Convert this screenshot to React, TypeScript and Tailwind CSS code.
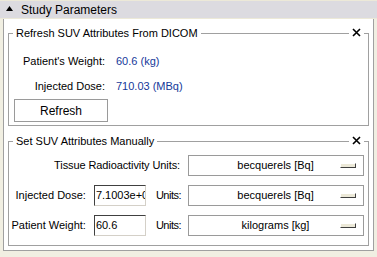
import React from "react";

function CloseX() {
  return (
    <svg width="9" height="9" viewBox="0 0 9 9" className="block">
      <path d="M1 1 L8 8 M8 1 L1 8" stroke="#000" strokeWidth="1.6" />
    </svg>
  );
}

function Group({ title, children, className }: { title: string; children: React.ReactNode; className?: string }) {
  return (
    <div className={`relative border border-[#a0a0a0] ${className ?? ""}`}>
      <div className="absolute -top-[8px] left-[4px] bg-white px-[3px] leading-[14px] whitespace-nowrap">{title}</div>
      <div className="absolute -top-[6px] right-[4px] bg-white pl-[3px] pr-[3px]">
        <CloseX />
      </div>
      {children}
    </div>
  );
}

function Dropdown({ label }: { label: string }) {
  return (
    <div className="flex h-[21px] w-[176px] shrink-0 items-center border border-[#9a9a9a] bg-white">
      <span className="flex-1 pl-[34px] text-center whitespace-nowrap">{label}</span>
      <span className="mr-[7px] ml-[12px] h-[5px] w-[16px] border border-[#ffffff] border-r-[#404040] border-b-[#404040] bg-[#ece9d8]" />
    </div>
  );
}

function Field({ value }: { value: string }) {
  return (
    <div className="mr-[10px] h-[21px] w-[52px] shrink-0 overflow-hidden border border-[#404040] border-r-[#d4d0c8] border-b-[#d4d0c8] bg-white pl-[1px] leading-[19px] whitespace-nowrap">
      {value}
    </div>
  );
}

export default function App() {
  return (
    <div
      className="h-[257px] w-[377px] bg-[#f1efe2] text-[11px] text-black"
      style={{ fontFamily: '"Liberation Sans", Arial, sans-serif' }}
    >
      <div className="flex h-[19px] items-center border-t border-b border-[#ece9d8] bg-[#dcdbe0] pl-[6px]">
        <svg width="7" height="5" viewBox="0 0 7 5" className="mr-[8px] mb-[2px]">
          <path d="M0 5 L3.5 0 L7 5 Z" fill="#000" />
        </svg>
        <span className="text-[12px]">Study Parameters</span>
      </div>
      <div className="mx-[3px] h-[232px] border border-t-0 border-[#a0a0a0] bg-white px-[4px] pt-[14px]">
        <Group title="Refresh SUV Attributes From DICOM" className="h-[93px]">
          <div className="grid grid-cols-[96px_1fr] gap-x-[11px] gap-y-[8px] pt-[19px]">
            <span className="text-right whitespace-nowrap">Patient's Weight:</span>
            <span className="text-[#15389a]">60.6 (kg)</span>
            <span className="text-right whitespace-nowrap">Injected Dose:</span>
            <span className="text-[#15389a]">710.03 (MBq)</span>
          </div>
          <button className="mt-[5px] ml-[5px] h-[23px] w-[94px] border border-[#9a9a9a] bg-white text-[12px]">
            Refresh
          </button>
        </Group>
        <Group title="Set SUV Attributes Manually" className="mt-[15px] h-[105px]">
          <div className="flex flex-col gap-[9px] pt-[13px] pr-[4px]">
            <div className="flex items-center justify-end">
              <span className="mr-[8px] whitespace-nowrap tracking-[-0.1px]">Tissue Radioactivity Units:</span>
              <Dropdown label="becquerels [Bq]" />
            </div>
            <div className="flex items-center justify-end">
              <span className="mr-[8px] whitespace-nowrap">Injected Dose:</span>
              <Field value="7.1003e+05" />
              <span className="mr-[7px] whitespace-nowrap tracking-[-0.5px]">Units:</span>
              <Dropdown label="becquerels [Bq]" />
            </div>
            <div className="flex items-center justify-end">
              <span className="mr-[8px] whitespace-nowrap">Patient Weight:</span>
              <Field value="60.6" />
              <span className="mr-[7px] whitespace-nowrap tracking-[-0.5px]">Units:</span>
              <Dropdown label="kilograms [kg]" />
            </div>
          </div>
        </Group>
      </div>
    </div>
  );
}
